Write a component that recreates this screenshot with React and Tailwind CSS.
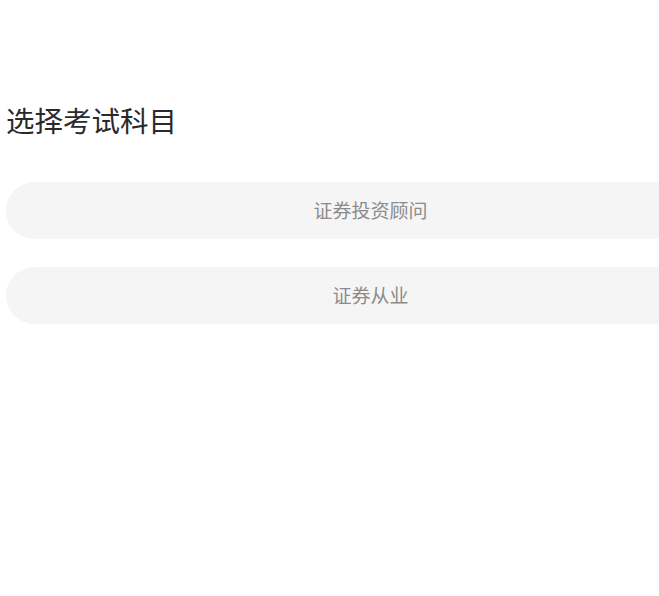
export default function App() {
  const subjects = ['证券投资顾问', '证券从业'];
  return (
    <div className="min-h-screen bg-white overflow-hidden" style={{ fontFamily: '"Noto Sans CJK SC", "Noto Sans", sans-serif' }}>
      <div className="pt-[98px] pl-[6px]">
        <h1 className="text-[28.5px] leading-[44px] text-[#2a2a2a] font-normal">选择考试科目</h1>
        <div className="mt-[40px] flex flex-col gap-[28px] w-[729px]">
          {subjects.map(s => (
            <button key={s} className="h-[57px] w-full rounded-full bg-[#f5f5f5] text-[19px] text-[#8c8c8c] flex items-center justify-center">
              {s}
            </button>
          ))}
        </div>
      </div>
    </div>
  );
}
